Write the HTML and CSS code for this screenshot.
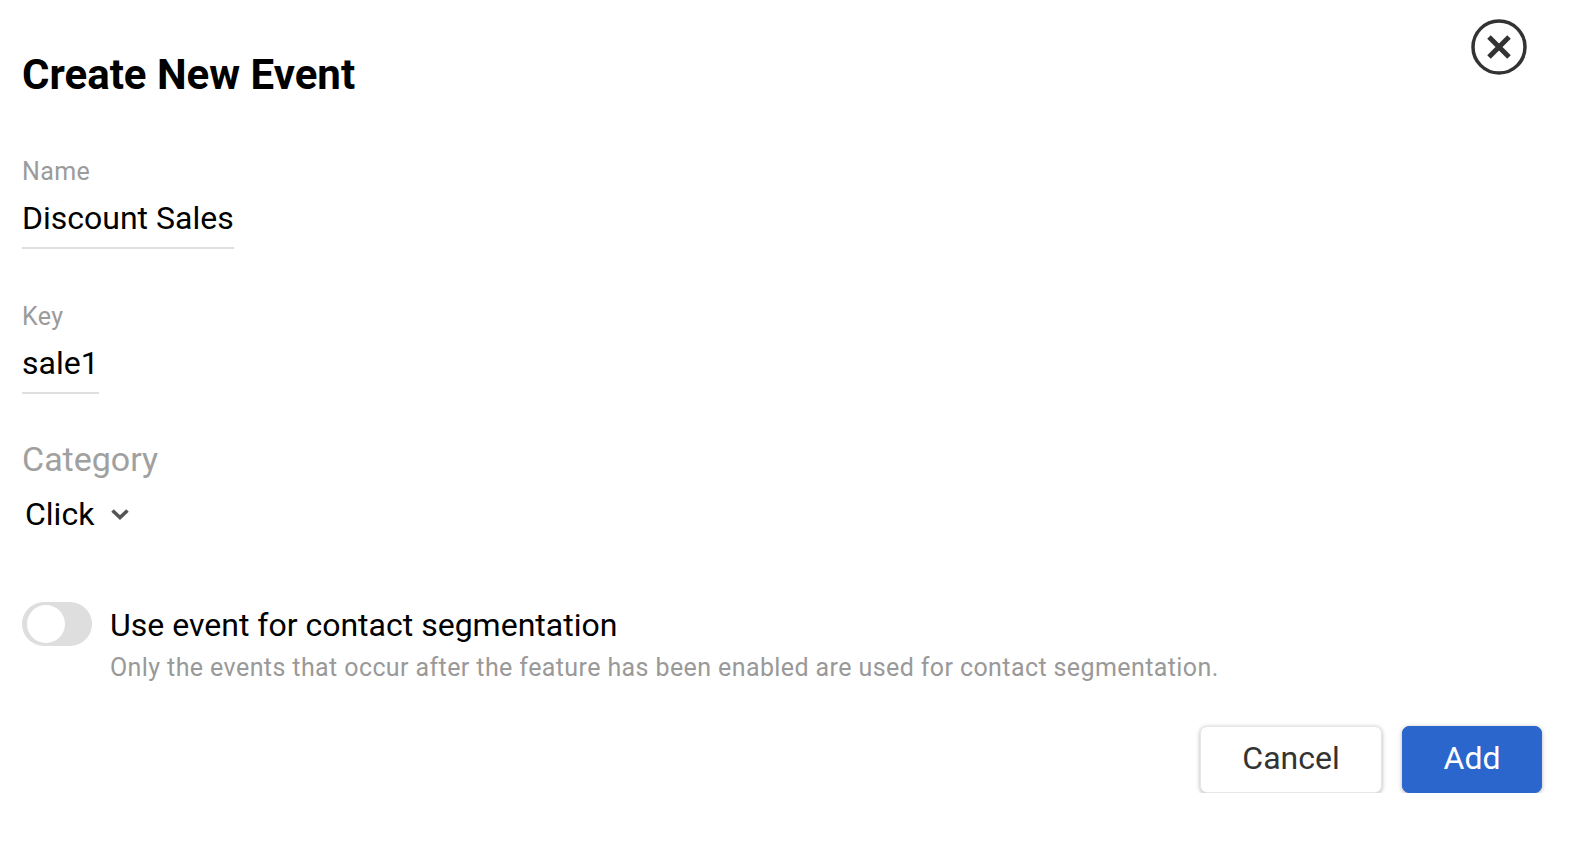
FILE: index.html
```html
<!DOCTYPE html>
<html lang="en">
<head>
<meta charset="utf-8">
<title>Create New Event</title>
<link rel="stylesheet" href="styles.css">
</head>
<body>
<div class="dialog">
  <div class="header">
    <h1 class="title">Create New Event</h1>
    <button class="close" aria-label="Close">
      <svg width="56" height="56" viewBox="0 0 56 56">
        <circle cx="28" cy="28" r="26" fill="none" stroke="#333" stroke-width="3.5"/>
        <path d="M18 18 L38 38 M38 18 L18 38" stroke="#333" stroke-width="5" fill="none"/>
      </svg>
    </button>
  </div>

  <div class="field field-first">
    <div class="label">Name</div>
    <div class="value">Discount Sales</div>
  </div>

  <div class="field field-next">
    <div class="label">Key</div>
    <div class="value">sale1</div>
  </div>

  <div class="category">
    <div class="category-label">Category</div>
    <div class="select">
      <span>Click</span>
      <svg class="chevron" width="20" height="12" viewBox="0 0 20 12">
        <polyline points="2.5,2.5 10,9.5 17.5,2.5" fill="none" stroke="#555" stroke-width="3.6"/>
      </svg>
    </div>
  </div>

  <div class="toggle-row">
    <div class="toggle"><div class="knob"></div></div>
    <div class="toggle-text">
      <div class="toggle-title">Use event for contact segmentation</div>
      <div class="toggle-desc">Only the events that occur after the feature has been enabled are used for contact segmentation.</div>
    </div>
  </div>

  <div class="footer">
    <button class="btn btn-cancel">Cancel</button>
    <button class="btn btn-add">Add</button>
  </div>
</div>
</body>
</html>
```
FILE: styles.css
```css
html, body {
  margin: 0;
  padding: 0;
  background: #fff;
}
body {
  font-family: Roboto, "Liberation Sans", sans-serif;
  color: #000;
}
.dialog {
  padding: 19px 37px 0 22px;
}
.header {
  display: flex;
  justify-content: space-between;
  align-items: flex-start;
}
.title {
  margin: 31px 0 0 0;
  font-size: 42px;
  line-height: 50px;
  font-weight: 700;
}
.close {
  width: 56px;
  height: 56px;
  margin: 0 15px 0 0;
  padding: 0;
  border: 0;
  background: none;
  display: flex;
}
.field {
  display: flex;
  flex-direction: column;
  align-items: flex-start;
}
.field-first { margin-top: 58px; }
.field-next { margin-top: 54px; }
.label {
  font-size: 25px;
  line-height: 28px;
  letter-spacing: 0.4px;
  color: #9b9b9b;
}
.value {
  margin-top: 13px;
  font-size: 32px;
  line-height: 38px;
  padding-bottom: 10px;
  border-bottom: 2px solid #e0e0e0;
}
.category {
  margin-top: 45px;
}
.category-label {
  font-size: 34px;
  line-height: 40px;
  color: #a0a0a0;
}
.select {
  margin-top: 16px;
  padding-left: 3px;
  display: flex;
  align-items: center;
  font-size: 32px;
  line-height: 38px;
}
.chevron {
  margin-left: 16px;
}
.toggle-row {
  margin-top: 69px;
  display: flex;
  align-items: flex-start;
}
.toggle {
  width: 70px;
  height: 44px;
  box-sizing: border-box;
  border-radius: 22px;
  background: #dedede;
  padding: 0 5px;
  display: flex;
  align-items: center;
  flex-shrink: 0;
}
.knob {
  width: 38px;
  height: 38px;
  border-radius: 50%;
  background: #fff;
}
.toggle-text {
  margin-left: 18px;
  padding-top: 4px;
}
.toggle-title {
  font-size: 32px;
  line-height: 38px;
  color: #000;
}
.toggle-desc {
  margin-top: 10px;
  font-size: 25px;
  line-height: 28px;
  letter-spacing: 0.4px;
  color: #999;
}
.footer {
  margin-top: 44px;
  display: flex;
  justify-content: flex-end;
  gap: 20px;
}
.btn {
  height: 67px;
  border-radius: 7px;
  font-family: Roboto, "Liberation Sans", sans-serif;
  font-size: 32px;
  padding: 0 0 4px 0;
  box-shadow: 0 1px 4px rgba(0, 0, 0, 0.3);
}
.btn-cancel {
  width: 182px;
  background: #fff;
  color: #333;
  border: 1px solid #e6e6e6;
}
.btn-add {
  width: 140px;
  background: #2b66cd;
  color: #fff;
  border: 1px solid #2b66cd;
}
```
